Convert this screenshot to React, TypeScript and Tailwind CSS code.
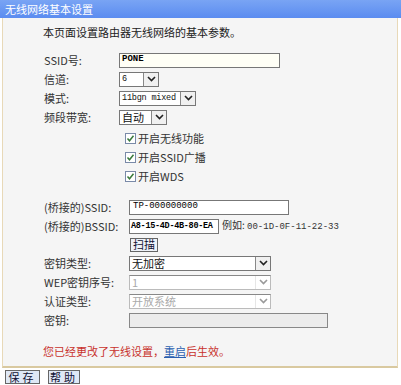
import React from 'react';

const font = { fontFamily: '"Noto Sans CJK SC", "Noto Sans", sans-serif' };
const mono = { fontFamily: '"Liberation Mono", "Noto Sans CJK SC", monospace' };

function Arrow({ disabled }: { disabled?: boolean }) {
  return (
    <span
      className={`flex h-full w-[15px] shrink-0 items-center justify-center border-l ${
        disabled ? 'border-[#e6e6e6] bg-white' : 'border-[#888] bg-[#f0f0f0]'
      }`}
    >
      <svg width="9" height="6" viewBox="0 0 9 6">
        <path d="M1 1 L4.5 4.5 L8 1" fill="none" stroke={disabled ? '#999' : '#222'} strokeWidth="1.6" />
      </svg>
    </span>
  );
}

function Select({
  value,
  width,
  disabled,
  monoText,
}: {
  value: string;
  width: string;
  disabled?: boolean;
  monoText?: boolean;
}) {
  return (
    <div
      className={`flex h-[15px] items-center border ${width} ${
        disabled ? 'border-[#bbb] border-t-[#888] bg-white text-[#aaa]' : 'border-[#777] bg-white text-[#111]'
      }`}
    >
      <span
        className={`flex-1 whitespace-nowrap pl-[2px] leading-[13px] ${
          monoText ? 'text-[8.5px] tracking-[-0.2px]' : 'text-[11px]'
        }`}
        style={monoText ? mono : undefined}
      >
        {value}
      </span>
      <Arrow disabled={disabled} />
    </div>
  );
}

function Row({ label, labelW, children }: { label: string; labelW: string; children: React.ReactNode }) {
  return (
    <div className="flex h-[19px] items-center">
      <span className={`${labelW} shrink-0 text-[11px] text-[#333]`}>{label}</span>
      {children}
    </div>
  );
}

function Check({ label }: { label: string }) {
  return (
    <div className="flex h-[19px] items-center pl-[122px]">
      <span className="flex h-[11px] w-[11px] items-center justify-center border border-[#7a8aa8] bg-white">
        <svg width="9" height="9" viewBox="0 0 9 9">
          <path d="M1.5 4.5 L3.5 6.8 L7.5 1.8" fill="none" stroke="#3a7a3a" strokeWidth="1.5" />
        </svg>
      </span>
      <span className="ml-[2px] text-[11px] text-[#333]">{label}</span>
    </div>
  );
}

export default function App() {
  return (
    <div className="h-[385px] w-[401px] bg-white" style={font}>
      <div className="flex h-[18px] items-center bg-gradient-to-b from-[#79a4f4] to-[#5b8cf0] pl-[5px] text-[11px] text-white">
        无线网络基本设置
      </div>
      <div className="ml-[2px] mr-[3px] h-[350px] border-x border-b-2 border-[#e8d9b8] border-b-[#d9c9a0] bg-[#f5f5f5]">
        <div className="pl-[40px] pt-[6px] text-[11px] text-[#222]">本页面设置路由器无线网络的基本参数。</div>
        <div className="mt-[10px] pl-[41px]">
          <Row label="SSID号:" labelW="w-[75px]">
            <div
              className="flex h-[15px] w-[161px] items-center border border-[#777] bg-[#fffff6] pl-[2px] text-[9px] font-bold"
              style={mono}
            >
              PONE
            </div>
          </Row>
          <Row label="信道:" labelW="w-[75px]">
            <Select value="6" width="w-[40px]" monoText />
          </Row>
          <Row label="模式:" labelW="w-[75px]">
            <Select value="11bgn mixed" width="w-[77px]" monoText />
          </Row>
          <Row label="频段带宽:" labelW="w-[75px]">
            <Select value="自动" width="w-[48px]" />
          </Row>
        </div>
        <div className="pt-[2px]">
          <Check label="开启无线功能" />
          <Check label="开启SSID广播" />
          <Check label="开启WDS" />
        </div>
        <div className="mt-[12px] pl-[41px]">
          <Row label="(桥接的)SSID:" labelW="w-[85px]">
            <div className="flex h-[15px] w-[160px] items-center border border-[#777] bg-white pl-[3px] text-[9px]" style={mono}>
              TP-000000000
            </div>
          </Row>
          <Row label="(桥接的)BSSID:" labelW="w-[85px]">
            <div
              className="flex h-[15px] w-[90px] items-center whitespace-nowrap border border-[#777] bg-white pl-[1px] text-[8.5px] font-bold tracking-[-0.3px]"
              style={mono}
            >
              A8-15-4D-4B-80-EA
            </div>
            <span className="ml-[3px] whitespace-nowrap text-[10px] text-[#333]">
              例如: <span className="text-[9px]" style={mono}>00-1D-0F-11-22-33</span>
            </span>
          </Row>
          <div className="flex h-[18px] items-center pl-[86px]">
            <span className="flex h-[14px] items-center border border-[#666] bg-[#eef2f8] px-[2px] text-[11px] text-[#113]">
              扫描
            </span>
          </div>
          <Row label="密钥类型:" labelW="w-[85px]">
            <Select value="无加密" width="w-[142px]" />
          </Row>
          <Row label="WEP密钥序号:" labelW="w-[85px]">
            <Select value="1" width="w-[142px]" disabled />
          </Row>
          <Row label="认证类型:" labelW="w-[85px]">
            <Select value="开放系统" width="w-[142px]" disabled />
          </Row>
          <Row label="密钥:" labelW="w-[85px]">
            <div className="h-[15px] w-[199px] border border-[#888] bg-[#ececec]" />
          </Row>
        </div>
        <div className="mt-[13px] pl-[40px] text-[11px] text-[#c8322c]">
          您已经更改了无线设置，<span className="text-[#2a5fb0] underline">重启</span>后生效。
        </div>
      </div>
      <div className="flex gap-[8px] pl-[5px] pt-[2px]">
        <span className="flex h-[14px] w-[35px] items-center justify-center border border-[#666] bg-[#dfe8f6] text-[11px] tracking-[3px] text-[#113]">
          保存
        </span>
        <span className="flex h-[14px] w-[32px] items-center justify-center border border-[#666] bg-[#dfe8f6] text-[11px] tracking-[3px] text-[#113]">
          帮助
        </span>
      </div>
    </div>
  );
}
